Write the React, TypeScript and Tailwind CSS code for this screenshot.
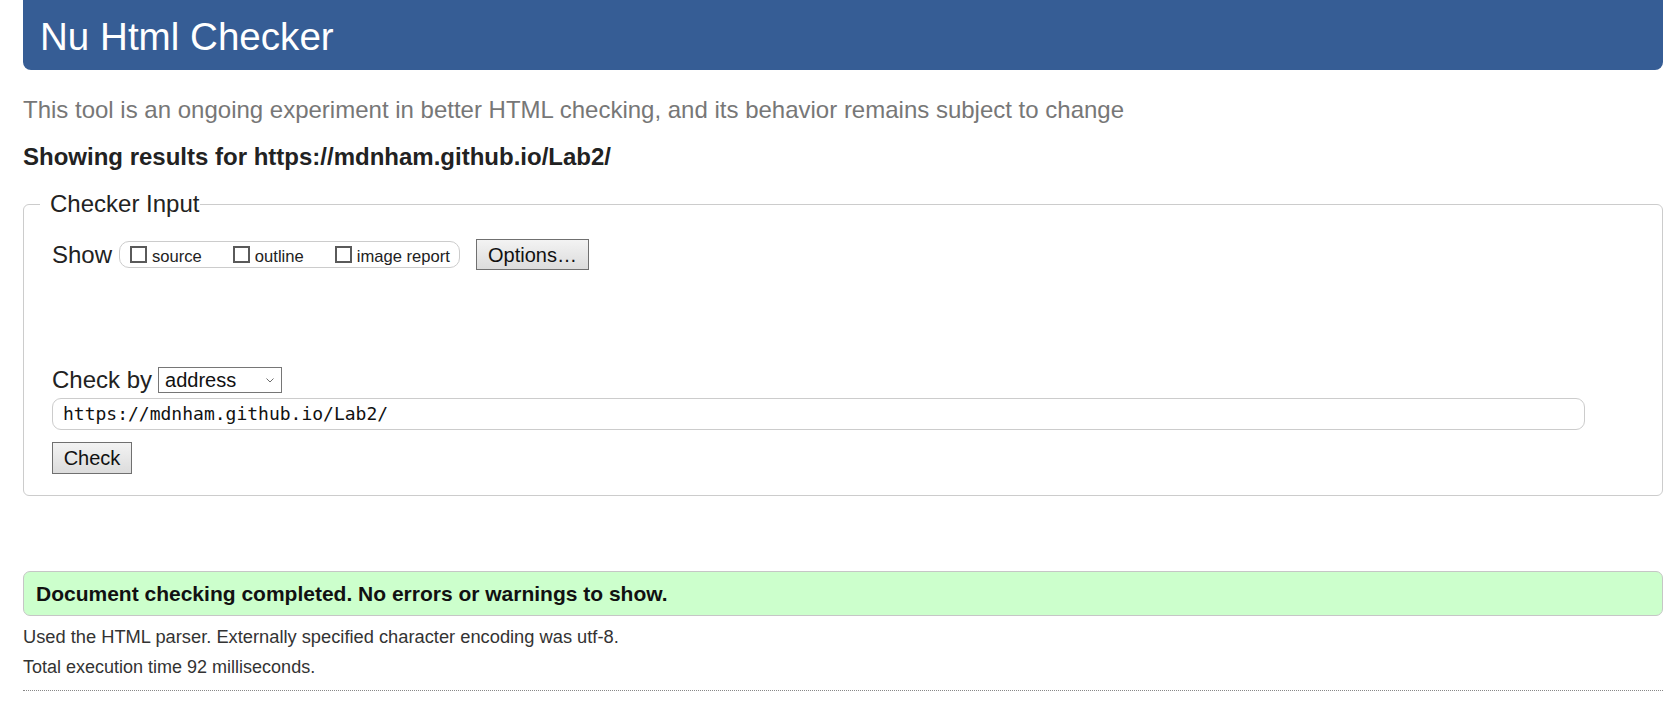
import React from 'react';

const sans = "font-['Liberation_Sans',Arial,sans-serif]";

const Checkbox: React.FC<{ label: string }> = ({ label }) => (
  <span className="flex items-center">
    <span className="w-[17px] h-[17px] border-2 border-[#5a5a5a] bg-white" />
    <span className="ml-[5px] text-[16.6px] leading-[20px] text-[#222] translate-y-[2px]">{label}</span>
  </span>
);

const GrayButton: React.FC<{ label: string; className?: string }> = ({ label, className = '' }) => (
  <button
    type="button"
    className={`border border-[#707070] bg-gradient-to-b from-[#f3f3f3] to-[#dcdcdc] text-[20px] leading-none text-[#111] ${className}`}
  >
    {label}
  </button>
);

export default function App() {
  return (
    <div className={`${sans} min-h-[709px] bg-white pl-[23px] pr-[15px]`}>
      <h1 className="h-[70px] rounded-b-[8px] bg-[#365d95] pl-[17px] pt-[18px] text-[38.6px] leading-none font-normal text-white">
        Nu Html Checker
      </h1>

      <p className="mt-[26px] text-[24px] leading-[28px] text-[#777]">
        This tool is an ongoing experiment in better HTML checking, and its behavior remains subject to change
      </p>

      <p className="mt-[19px] text-[24px] leading-[28px] font-bold text-[#222]">
        Showing results for https://mdnham.github.io/Lab2/
      </p>

      <fieldset className="mt-[19px] rounded-[6px] border border-[#cccccc] p-0">
        <legend className="ml-[16px] pl-[10px] pr-[1px] text-[24px] leading-[28px] text-[#222]">Checker Input</legend>

        <div className="pl-[28px] pr-[77px] pb-[21px]">
          <div className="mt-[21px] flex items-center">
            <span className="text-[24px] leading-[28px] text-[#222]">Show</span>
            <div className="ml-[7px] flex h-[27px] items-center rounded-[10px] border border-[#cccccc] pl-[10px] pr-[9px]">
              <Checkbox label="source" />
              <span className="w-[31px]" />
              <Checkbox label="outline" />
              <span className="w-[31px]" />
              <Checkbox label="image report" />
            </div>
            <GrayButton label="Options…" className="ml-[16px] h-[31px] w-[113px]" />
          </div>

          <div className="mt-[96px] flex items-center">
            <span className="text-[24px] leading-[28px] text-[#222]">Check by</span>
            <div className="ml-[6px] flex h-[26px] w-[124px] items-center justify-between border border-[#767676] bg-white pl-[6px] pr-[7px]">
              <span className="text-[20px] leading-none text-[#111]">address</span>
              <svg width="8" height="5" viewBox="0 0 8 5" fill="none" stroke="#6d6d6d" strokeWidth="1">
                <path d="M0.5 0.5 L4 4 L7.5 0.5" />
              </svg>
            </div>
          </div>

          <div className="mt-[4px] flex h-[32px] items-center rounded-[9px] border border-[#cccccc] bg-white pl-[10px]">
            <span className="font-['DejaVu_Sans_Mono','Liberation_Mono',monospace] text-[18px] leading-none text-[#111]">
              https://mdnham.github.io/Lab2/
            </span>
          </div>

          <GrayButton label="Check" className="mt-[12px] h-[32px] w-[80px]" />
        </div>
      </fieldset>

      <div className="mt-[75px] flex h-[45px] items-center rounded-[7px] border border-[#c6c6c6] bg-[#ccffcc] pl-[12px]">
        <span className="text-[21px] leading-[24px] font-bold text-[#111]">
          Document checking completed. No errors or warnings to show.
        </span>
      </div>

      <p className="mt-[6px] text-[18.3px] leading-[30px] text-[#333]">
        Used the HTML parser. Externally specified character encoding was utf-8.
      </p>
      <p className="text-[18px] leading-[30px] text-[#333]">Total execution time 92 milliseconds.</p>
      <div className="mt-[8px] border-t border-dotted border-[#888]" />
    </div>
  );
}
